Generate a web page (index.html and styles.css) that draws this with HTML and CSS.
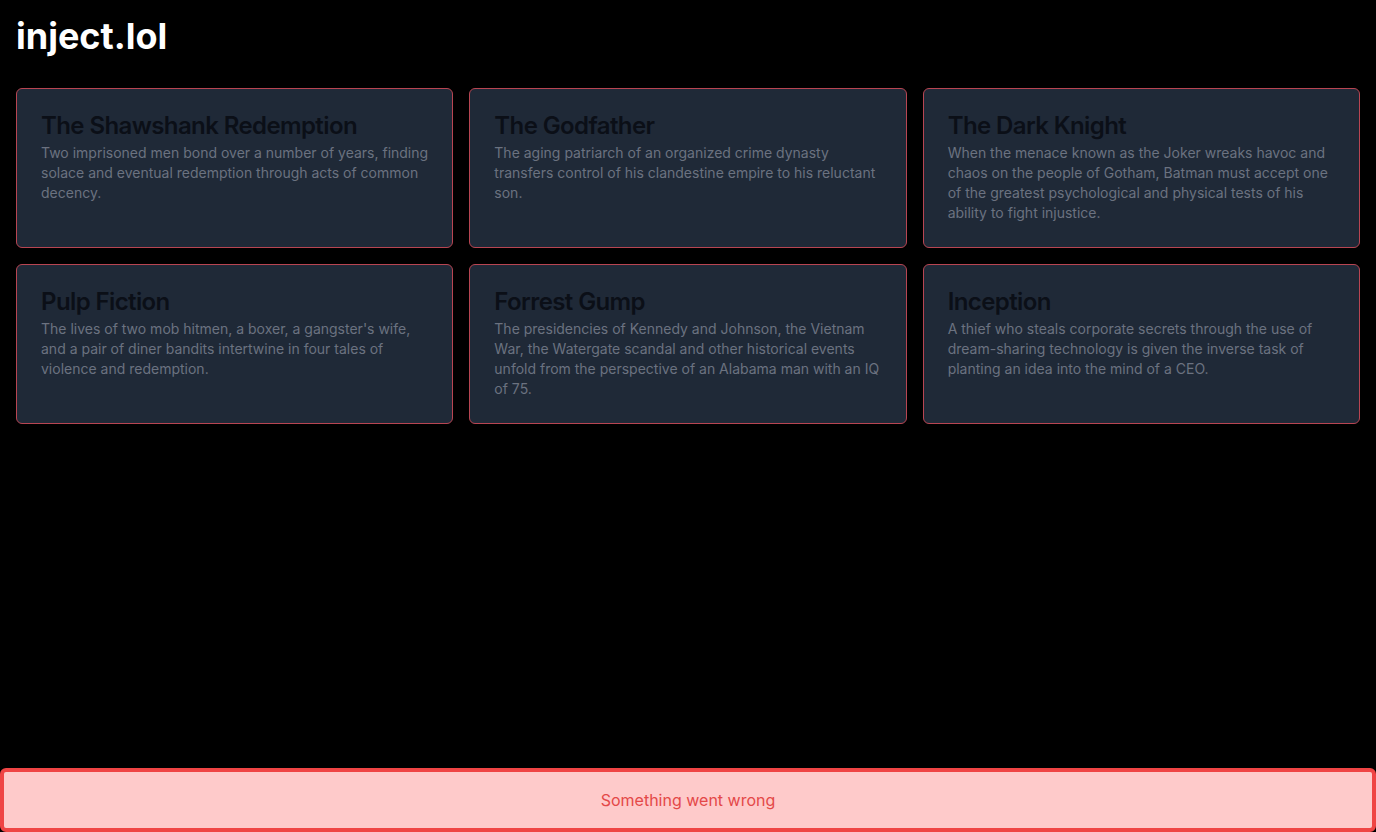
FILE: index.html
```html
<!DOCTYPE html>
<html>
<head>
<meta charset="utf-8">
<link rel="stylesheet" href="styles.css">
</head>
<body>
<main class="page">
  <h1 class="brand">inject.lol</h1>
  <div class="grid">
    <div class="card"><h2 class="card-title">The Shawshank Redemption</h2><p class="card-text">Two imprisoned men bond over a number of years, finding solace and eventual redemption through acts of common decency.</p></div>
    <div class="card"><h2 class="card-title">The Godfather</h2><p class="card-text">The aging patriarch of an organized crime dynasty transfers control of his clandestine empire to his reluctant son.</p></div>
    <div class="card"><h2 class="card-title">The Dark Knight</h2><p class="card-text">When the menace known as the Joker wreaks havoc and chaos on the people of Gotham, Batman must accept one of the greatest psychological and physical tests of his ability to fight injustice.</p></div>
    <div class="card"><h2 class="card-title">Pulp Fiction</h2><p class="card-text">The lives of two mob hitmen, a boxer, a gangster's wife, and a pair of diner bandits intertwine in four tales of violence and redemption.</p></div>
    <div class="card"><h2 class="card-title">Forrest Gump</h2><p class="card-text">The presidencies of Kennedy and Johnson, the Vietnam War, the Watergate scandal and other historical events unfold from the perspective of an Alabama man with an IQ of 75.</p></div>
    <div class="card"><h2 class="card-title">Inception</h2><p class="card-text">A thief who steals corporate secrets through the use of dream-sharing technology is given the inverse task of planting an idea into the mind of a CEO.</p></div>
  </div>
</main>
<div class="toast">Something went wrong</div>
</body>
</html>
```
FILE: styles.css
```css
html, body {
  margin: 0;
  padding: 0;
  background: #000;
  font-family: Inter, "Noto Sans", sans-serif;
}
.page {
  padding: 16px;
}
.brand {
  margin: 0 0 32px 0;
  font-size: 36px;
  line-height: 40px;
  font-weight: 700;
  color: #fff;
}
.grid {
  display: grid;
  grid-template-columns: repeat(3, 1fr);
  gap: 16px;
}
.card {
  box-sizing: border-box;
  height: 160px;
  padding: 21px 24px 24px;
  background: #1f2937;
  border: 1px solid #b84552;
  border-radius: 6px;
}
.card-title {
  margin: 0;
  font-size: 24px;
  line-height: 32px;
  font-weight: 600;
  letter-spacing: -0.025em;
  color: #0b0f17;
}
.card-text {
  margin: 1px 0 0;
  font-size: 14px;
  line-height: 20px;
  color: #6b7280;
}
.toast {
  position: fixed;
  left: 0;
  right: 0;
  bottom: 0;
  box-sizing: border-box;
  height: 64px;
  padding: 16px;
  background: #fecaca;
  border: 4px solid #ef4444;
  border-radius: 6px;
  color: #e44848;
  font-size: 16px;
  line-height: 24px;
  text-align: center;
}
```
